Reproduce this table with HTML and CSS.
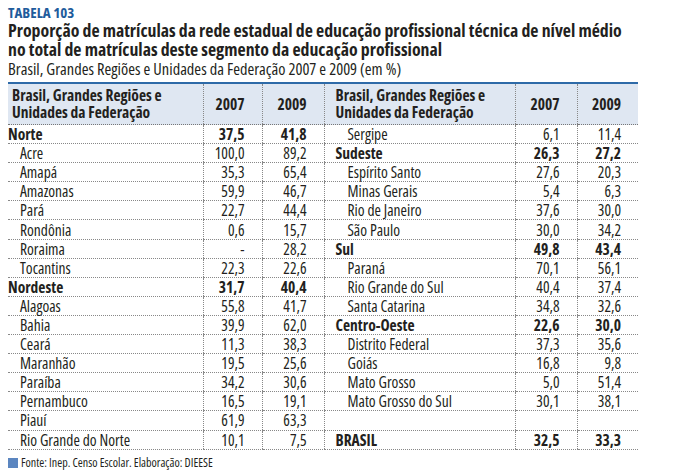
FILE: index.html
```html
<!DOCTYPE html>
<html lang="pt">
<head>
<meta charset="utf-8">
<title>Tabela 103</title>
<link rel="stylesheet" href="styles.css">
</head>
<body>
<div class="page">
  <div class="label">TABELA 103</div>
  <h1 class="title">Proporção de matrículas da rede estadual de educação profissional técnica de nível médio<br>no total de matrículas deste segmento da educação profissional</h1>
  <div class="subtitle">Brasil, Grandes Regiões e Unidades da Federação 2007 e 2009 (em %)</div>
  <table class="data">
    <colgroup>
      <col class="c-name-l"><col class="c-num"><col class="c-num2">
      <col class="c-name-r"><col class="c-num2"><col class="c-num3">
    </colgroup>
    <thead>
      <tr>
        <th class="name">Brasil, Grandes Regiões e<br>Unidades da Federação</th>
        <th class="num">2007</th>
        <th class="num">2009</th>
        <th class="name right">Brasil, Grandes Regiões e<br>Unidades da Federação</th>
        <th class="num">2007</th>
        <th class="num">2009</th>
      </tr>
    </thead>
    <tbody>
      <tr class="b-l"><td class="name">Norte</td><td class="num">37,5</td><td class="num">41,8</td><td class="name right st">Sergipe</td><td class="num">6,1</td><td class="num">11,4</td></tr>
      <tr class="b-r"><td class="name st">Acre</td><td class="num">100,0</td><td class="num">89,2</td><td class="name right">Sudeste</td><td class="num">26,3</td><td class="num">27,2</td></tr>
      <tr><td class="name st">Amapá</td><td class="num">35,3</td><td class="num">65,4</td><td class="name right st">Espírito Santo</td><td class="num">27,6</td><td class="num">20,3</td></tr>
      <tr><td class="name st">Amazonas</td><td class="num">59,9</td><td class="num">46,7</td><td class="name right st">Minas Gerais</td><td class="num">5,4</td><td class="num">6,3</td></tr>
      <tr><td class="name st">Pará</td><td class="num">22,7</td><td class="num">44,4</td><td class="name right st">Rio de Janeiro</td><td class="num">37,6</td><td class="num">30,0</td></tr>
      <tr><td class="name st">Rondônia</td><td class="num">0,6</td><td class="num">15,7</td><td class="name right st">São Paulo</td><td class="num">30,0</td><td class="num">34,2</td></tr>
      <tr class="b-r"><td class="name st">Roraima</td><td class="num">-</td><td class="num">28,2</td><td class="name right">Sul</td><td class="num">49,8</td><td class="num">43,4</td></tr>
      <tr><td class="name st">Tocantins</td><td class="num">22,3</td><td class="num">22,6</td><td class="name right st">Paraná</td><td class="num">70,1</td><td class="num">56,1</td></tr>
      <tr class="b-l"><td class="name">Nordeste</td><td class="num">31,7</td><td class="num">40,4</td><td class="name right st">Rio Grande do Sul</td><td class="num">40,4</td><td class="num">37,4</td></tr>
      <tr><td class="name st">Alagoas</td><td class="num">55,8</td><td class="num">41,7</td><td class="name right st">Santa Catarina</td><td class="num">34,8</td><td class="num">32,6</td></tr>
      <tr class="b-r"><td class="name st">Bahia</td><td class="num">39,9</td><td class="num">62,0</td><td class="name right">Centro-Oeste</td><td class="num">22,6</td><td class="num">30,0</td></tr>
      <tr><td class="name st">Ceará</td><td class="num">11,3</td><td class="num">38,3</td><td class="name right st">Distrito Federal</td><td class="num">37,3</td><td class="num">35,6</td></tr>
      <tr><td class="name st">Maranhão</td><td class="num">19,5</td><td class="num">25,6</td><td class="name right st">Goiás</td><td class="num">16,8</td><td class="num">9,8</td></tr>
      <tr><td class="name st">Paraíba</td><td class="num">34,2</td><td class="num">30,6</td><td class="name right st">Mato Grosso</td><td class="num">5,0</td><td class="num">51,4</td></tr>
      <tr><td class="name st">Pernambuco</td><td class="num">16,5</td><td class="num">19,1</td><td class="name right st">Mato Grosso do Sul</td><td class="num">30,1</td><td class="num">38,1</td></tr>
      <tr><td class="name st">Piauí</td><td class="num">61,9</td><td class="num">63,3</td><td class="name right"></td><td class="num"></td><td class="num"></td></tr>
      <tr class="b-r"><td class="name st">Rio Grande do Norte</td><td class="num">10,1</td><td class="num">7,5</td><td class="name right">BRASIL</td><td class="num">32,5</td><td class="num">33,3</td></tr>
    </tbody>
  </table>
  <div class="source"><span class="square"></span>Fonte: Inep. Censo Escolar. Elaboração: DIEESE</div>
</div>
</body>
</html>
```

FILE: styles.css
```css
html, body {
  margin: 0;
  padding: 0;
  background: #ffffff;
}
body {
  font-family: "Open Sans", "DejaVu Sans Condensed", sans-serif;
  font-stretch: 75%;
  color: #231f20;
}
.page {
  padding: 4px 8px 0 8px;
  width: 630px;
}
.label {
  color: #1f5c9c;
  font-weight: bold;
  font-size: 15px;
  line-height: 16px;
}
.title {
  margin: 1px 0 0 0;
  font-size: 17.8px;
  line-height: 19px;
  font-weight: bold;
}
.subtitle {
  font-size: 16.4px;
  line-height: 19px;
  margin-top: 0;
}
.data {
  margin-top: 4px;
  width: 630px;
  border-collapse: collapse;
  border-top: 2px solid #2e6aa8;
  table-layout: fixed;
  font-size: 15.5px;
}
.c-name-l { width: 195px; }
.c-num { width: 59px; }
.c-num2 { width: 62px; }
.c-name-r { width: 191px; }
.c-num3 { width: 61px; }
thead tr {
  background: #dfe7f2;
}
th {
  height: 40px;
  padding: 0;
  font-weight: bold;
  line-height: 17px;
  text-align: left;
  vertical-align: middle;
  border-bottom: 1px dotted #777;
}
td {
  height: 18.1px;
  padding: 0;
  line-height: 18px;
  border-bottom: 1px dotted #888;
  white-space: nowrap;
}
th.name {
  padding-left: 4px;
}
th.num, td.num {
  text-align: right;
  padding-right: 17px;
  border-left: 1px dotted #888;
}
td.name {
  padding-left: 0;
}
td.name.st {
  padding-left: 12px;
}
th.right, td.right {
  border-left: 1px dotted #888;
  padding-left: 11px;
}
td.right.st {
  padding-left: 23px;
}
.b-l td:nth-child(-n+3) {
  font-weight: bold;
}
.b-r td:nth-child(n+4) {
  font-weight: bold;
}
.source {
  display: flex;
  align-items: center;
  gap: 3px;
  margin-top: 6px;
  font-size: 12px;
  line-height: 14px;
}
.square {
  width: 10px;
  height: 10px;
  background: #5b86c0;
}
```
